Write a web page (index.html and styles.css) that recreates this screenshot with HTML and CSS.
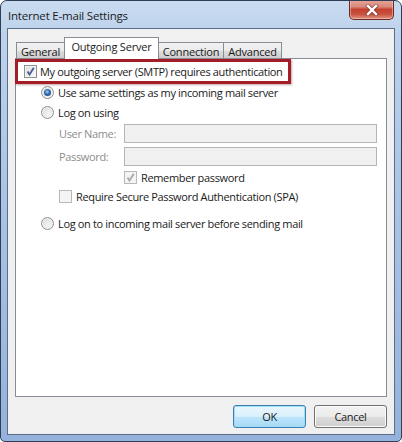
FILE: index.html
```html
<!DOCTYPE html>
<html>
<head>
<meta charset="utf-8">
<link rel="stylesheet" href="styles.css">
</head>
<body>
<div class="window">
  <div class="titlebar">
    <span class="title">Internet E-mail Settings</span>
    <div class="close">
      <svg width="14" height="12" viewBox="0 0 14 12">
        <path d="M3 2 L11 10 M11 2 L3 10" stroke="#5b2a24" stroke-width="4" stroke-linecap="square" fill="none" opacity="0.55"/>
        <path d="M3 2 L11 10 M11 2 L3 10" stroke="#ffffff" stroke-width="2.4" stroke-linecap="square" fill="none"/>
      </svg>
    </div>
  </div>
  <div class="client">
    <div class="tabs">
      <div class="tab tab-general">General</div>
      <div class="tab tab-active">Outgoing Server</div>
      <div class="tab tab-conn">Connection</div>
      <div class="tab tab-adv">Advanced</div>
    </div>
    <div class="panel">
      <div class="highlight">
        <span class="check checked">
          <svg width="11" height="11" viewBox="0 0 11 11"><path d="M2.5 5.5 L4.5 8.5 L8.8 1.8" stroke="#4a5d94" stroke-width="1.8" fill="none"/></svg>
        </span>
        <span class="label">My outgoing server (SMTP) requires authentication</span>
      </div>
      <div class="opts">
        <div class="row row-same">
          <span class="radio selected"></span>
          <span class="label">Use same settings as my incoming mail server</span>
        </div>
        <div class="row row-logon">
          <span class="radio"></span>
          <span class="label">Log on using</span>
        </div>
        <div class="field field-user">
          <span class="flabel">User Name:</span>
          <span class="input"></span>
        </div>
        <div class="field field-pass">
          <span class="flabel">Password:</span>
          <span class="input"></span>
        </div>
        <div class="row row-remember">
          <span class="check disabled">
            <svg width="11" height="11" viewBox="0 0 11 11"><path d="M2.5 5.5 L4.5 8.5 L8.8 1.8" stroke="#a9a9a9" stroke-width="1.8" fill="none"/></svg>
          </span>
          <span class="label">Remember password</span>
        </div>
        <div class="row row-spa">
          <span class="check disabled"></span>
          <span class="label">Require Secure Password Authentication (SPA)</span>
        </div>
        <div class="row row-incoming">
          <span class="radio"></span>
          <span class="label">Log on to incoming mail server before sending mail</span>
        </div>
      </div>
    </div>
    <div class="buttons">
      <div class="btn btn-default">OK</div>
      <div class="btn">Cancel</div>
    </div>
  </div>
</div>
</body>
</html>
```

FILE: styles.css
```css
html, body {
  margin: 0;
  padding: 0;
  background: #ffffff;
}

body {
  font-family: "Open Sans", "Noto Sans", sans-serif;
  font-size: 11px;
  color: #1a1a1a;
  letter-spacing: -0.35px;
}

.window {
  width: 402px;
  height: 442px;
  box-sizing: border-box;
  border: 1px solid #2f3e55;
  border-radius: 7px 7px 5px 5px;
  background: linear-gradient(180deg, #c9dbef 0%, #bcd2ec 8%, #a8c2e4 50%, #94b2dc 100%);
  padding: 0 6px 6px 6px;
  display: flex;
  flex-direction: column;
  overflow: hidden;
}

.titlebar {
  height: 27px;
  display: flex;
  align-items: center;
  padding-left: 1px;
  flex: none;
}

.title {
  font-size: 11.5px;
  letter-spacing: -0.2px;
  color: #1c1c1c;
  margin-top: 2px;
}

.close {
  margin-left: auto;
  margin-right: 1px;
  align-self: flex-start;
  margin-top: -1px;
  width: 45px;
  height: 20px;
  box-sizing: border-box;
  border: 1px solid #6b2a22;
  border-top: none;
  border-radius: 0 0 5px 5px;
  background: linear-gradient(180deg, #e6a597 0%, #d98a7e 35%, #c4412f 50%, #c9513f 75%, #e09585 100%);
  display: flex;
  align-items: center;
  justify-content: center;
  box-shadow: inset 0 0 0 1px rgba(255, 220, 210, 0.45);
}

.client {
  flex: 1;
  border: 1px solid #5d6e88;
  background: #f0f0f0;
  padding: 8px 7px 6px 7px;
  display: flex;
  flex-direction: column;
}

.tabs {
  height: 21px;
  display: flex;
  align-items: flex-end;
  padding-left: 1px;
  flex: none;
  position: relative;
  z-index: 2;
}

.tab {
  height: 16px;
  box-sizing: border-box;
  border: 1px solid #898c95;
  border-bottom: none;
  background: linear-gradient(180deg, #f2f2f2 0%, #ebebeb 50%, #dddddd 51%, #cfcfcf 100%);
  display: flex;
  align-items: center;
  justify-content: center;
  font-size: 11px;
  letter-spacing: -0.2px;
  color: #1a1a1a;
  padding-top: 1px;
}

.tab-general { width: 48px; border-right: none; }
.tab-conn { width: 65px; border-left: none; }
.tab-adv { width: 58px; border-left: none; }

.tab-active {
  width: 95px;
  height: 22px;
  margin-bottom: -1px;
  background: #ffffff;
  padding-top: 0;
  padding-bottom: 4px;
}

.panel {
  height: 339px;
  box-sizing: border-box;
  border: 1px solid #898c95;
  background: #ffffff;
  flex: none;
  position: relative;
  z-index: 1;
}

.highlight {
  width: 276px;
  height: 25px;
  box-sizing: border-box;
  margin-left: -1px;
  border: 3px solid #a41c25;
  box-shadow: 1px 1px 2px rgba(80, 0, 0, 0.35);
  display: flex;
  align-items: center;
  padding-left: 6px;
  position: relative;
}

.check {
  width: 13px;
  height: 13px;
  box-sizing: border-box;
  border: 1px solid #8e8f8f;
  background: linear-gradient(135deg, #dcdcdc 0%, #fbfbfb 100%);
  box-shadow: inset 0 0 0 1px #f4f4f4;
  flex: none;
  display: flex;
  align-items: center;
  justify-content: center;
}

.check.disabled {
  border-color: #b8b8b8;
  background: #f4f4f4;
  box-shadow: none;
}

.label {
  margin-left: 3px;
  white-space: nowrap;
  font-size: 11px;
  color: #1a1a1a;
}

.opts {
  padding-left: 25px;
}

.row {
  display: flex;
  align-items: center;
  height: 13px;
}

.row-same { margin-top: 0; height: 16px; }
.row-logon { margin-top: 4px; height: 16px; }
.row-remember { margin-top: 5px; padding-left: 83px; }
.row-spa { margin-top: 6px; padding-left: 18px; }
.row-incoming { margin-top: 14px; }

.row .label { margin-left: 4px; }

.radio {
  width: 13px;
  height: 13px;
  box-sizing: border-box;
  border-radius: 50%;
  border: 1px solid #8e8f8f;
  background: radial-gradient(circle at 60% 65%, #f6f6f6 0%, #e2e2e2 60%, #cfcfcf 100%);
  box-shadow: inset 0 0 0 1px #f4f4f4;
  flex: none;
  position: relative;
}

.radio.selected::after {
  content: "";
  position: absolute;
  left: 2px;
  top: 2px;
  width: 7px;
  height: 7px;
  border-radius: 50%;
  background: radial-gradient(circle at 45% 40%, #a6d0f5 0%, #2d6bb0 45%, #163c6a 100%);
}

.field {
  display: flex;
  align-items: center;
  padding-left: 18px;
  height: 19px;
}

.field-user { margin-top: 4px; }
.field-pass { margin-top: 4px; }

.flabel {
  width: 65px;
  color: #8d8d8d;
  font-size: 11px;
  flex: none;
}

.input {
  width: 253px;
  height: 19px;
  box-sizing: border-box;
  border: 1px solid #b5b5b5;
  background: #f0f0f0;
  display: block;
}

.buttons {
  margin-top: 8px;
  display: flex;
  justify-content: flex-end;
  gap: 8px;
}

.btn {
  width: 73px;
  height: 23px;
  box-sizing: border-box;
  border: 1px solid #707070;
  border-radius: 3px;
  background: linear-gradient(180deg, #f2f2f2 0%, #ebebeb 50%, #dddddd 51%, #cfcfcf 100%);
  box-shadow: inset 0 0 0 1px #fbfbfb;
  display: flex;
  align-items: center;
  justify-content: center;
  font-size: 11px;
  color: #1a1a1a;
}

.btn-default {
  border-color: #3c7fb1;
  background: linear-gradient(180deg, #eaf6fd 0%, #d9f0fc 50%, #bee6fd 51%, #a7d9f5 100%);
  box-shadow: inset 0 0 0 1px #9edcf7;
}
```
